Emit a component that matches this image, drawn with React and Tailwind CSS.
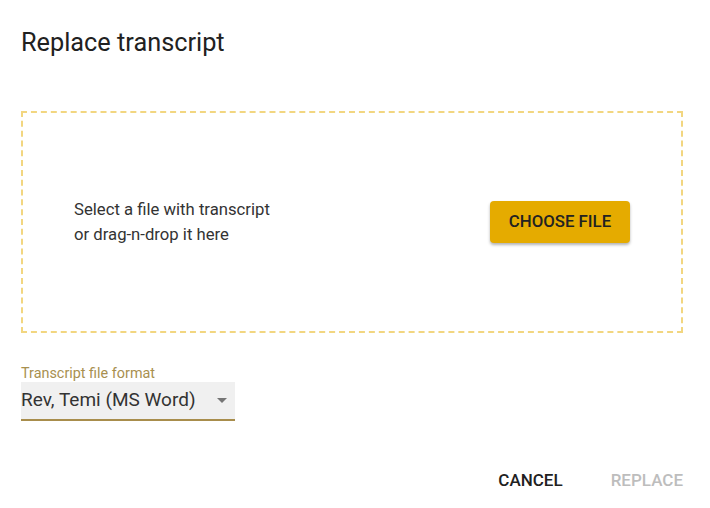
export default function App() {
  return (
    <div className="w-[710px] h-[508px] bg-white pl-[21px] pr-[27px] relative font-['Roboto',sans-serif] text-[#212121]">
      <h1 className="pt-[27px] text-[25.3px] leading-[32px] font-normal">Replace transcript</h1>

      <div className="mt-[52px] h-[222px] border-2 border-dashed border-[#f2d680] flex items-center justify-between pl-[51px] pr-[51px]">
        <p className="text-[16.7px] leading-[25px] text-[#333]">
          Select a file with transcript
          <br />
          or drag-n-drop it here
        </p>
        <button className="w-[140px] h-[42px] rounded bg-[#e5ab00] text-[16.8px] font-medium text-[#222] shadow-[0_2px_3px_rgba(0,0,0,0.3)]">
          CHOOSE FILE
        </button>
      </div>

      <div className="mt-[33px] w-[214px]">
        <div className="text-[14.4px] leading-[16px] text-[#a8904f]">Transcript file format</div>
        <div className="h-[39px] bg-[#f0f0f0] border-b-2 border-[#a88d4c] flex items-center justify-between pr-[8px]">
          <span className="text-[19px] text-[#333]">Rev, Temi (MS Word)</span>
          <svg width="10" height="5" viewBox="0 0 10 5">
            <path d="M0 0 L5 5 L10 0 Z" fill="#757575" />
          </svg>
        </div>
      </div>

      <div className="mt-[47px] flex justify-end gap-[48px] text-[17px] font-medium">
        <button className="text-[#212121]">CANCEL</button>
        <button className="text-[#bdbdbd]">REPLACE</button>
      </div>
    </div>
  );
}
